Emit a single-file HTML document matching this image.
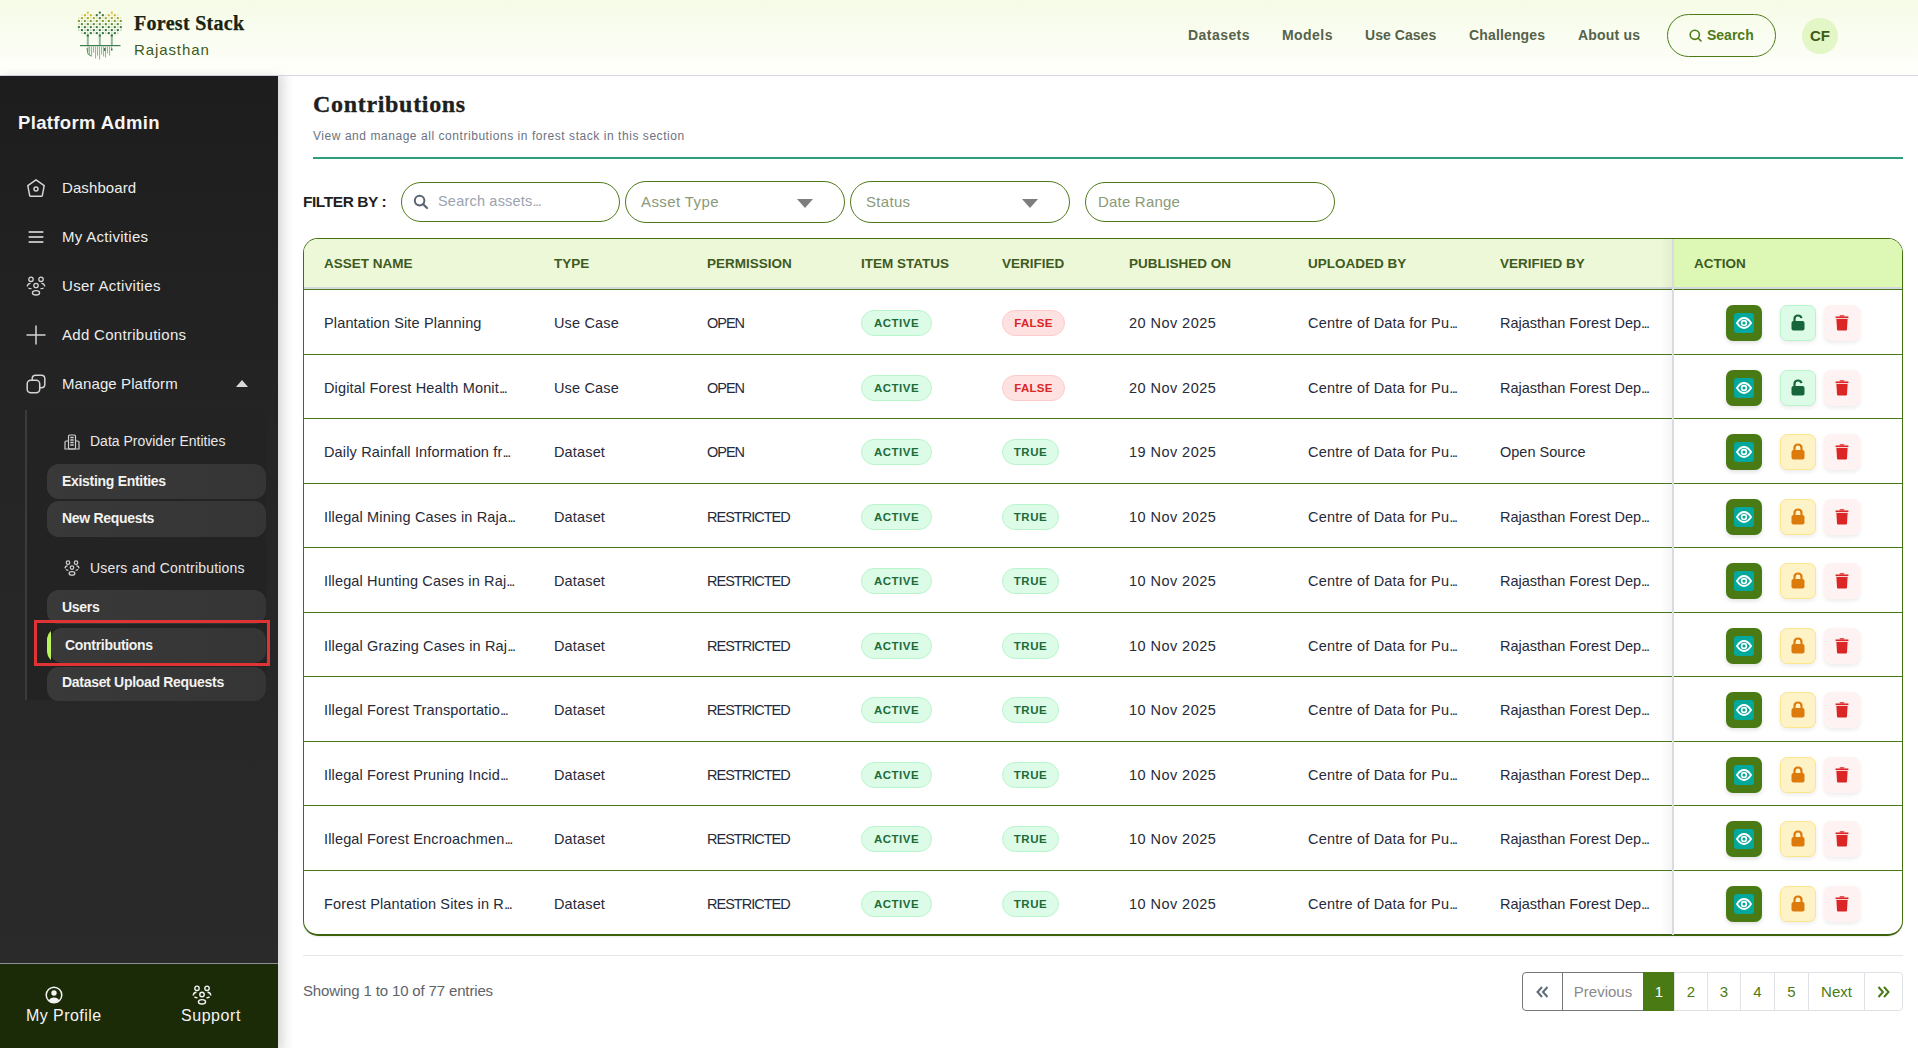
<!DOCTYPE html>
<html><head><meta charset="utf-8">
<style>
*{box-sizing:border-box;margin:0;padding:0}
html,body{width:1918px;height:1048px;overflow:hidden;background:#fff;font-family:"Liberation Sans",sans-serif}
.a{position:absolute;white-space:nowrap}
#hdr{position:absolute;left:0;top:0;width:1918px;height:76px;background:linear-gradient(180deg,#f6fbe6 0%,#fafdf1 50%,#fefffb 100%);border-bottom:1px solid #d5d9df}
.nav{position:absolute;top:27px;font-size:14px;font-weight:700;color:#56624b;line-height:16px;letter-spacing:0.45px}
#side{position:absolute;left:0;top:76px;width:278px;height:972px;background:linear-gradient(180deg,#1d1d1d 0%,#252525 40%,#2b2b2b 100%);box-shadow:3px 0 10px rgba(0,0,0,.10)}
.si{position:absolute;left:62px;font-size:15px;color:#ededed;line-height:18px;letter-spacing:0.3px}
.ico{position:absolute}
.pill{position:absolute;left:47px;width:219px;border-radius:12px;background:linear-gradient(90deg,#393939,#353535);}
.pt{position:absolute;left:15px;font-size:14px;font-weight:700;color:#f1f1f1;line-height:16px}
#foot{position:absolute;left:0;top:963px;width:278px;height:85px;background:#1b2a07;border-top:1px solid #8a8f98}
</style></head><body>

<div id="hdr">
  <svg class="ico" style="left:74px;top:8px" width="54" height="54" viewBox="0 0 54 54"><rect x="12.8" y="3.6" width="2" height="2" fill="#d8c22e"/><rect x="24.8" y="3.6" width="2" height="2" fill="#2f6f45"/><rect x="36.8" y="3.6" width="2" height="2" fill="#d8c22e"/><rect x="9.9" y="6.2" width="2" height="2" fill="#c9b62a"/><rect x="15.8" y="6.2" width="2" height="2" fill="#c9b62a"/><rect x="21.8" y="6.2" width="2" height="2" fill="#2f6f45"/><rect x="27.8" y="6.2" width="2" height="2" fill="#2f6f45"/><rect x="33.8" y="6.2" width="2" height="2" fill="#c9b62a"/><rect x="39.8" y="6.2" width="2" height="2" fill="#c9b62a"/><rect x="7.3" y="6.6" width="1.2" height="1.2" fill="#c9b62a" opacity="0.45"/><rect x="13.2" y="6.6" width="1.2" height="1.2" fill="#c9b62a" opacity="0.45"/><rect x="19.2" y="6.6" width="1.2" height="1.2" fill="#c9b62a" opacity="0.45"/><rect x="25.2" y="6.6" width="1.2" height="1.2" fill="#c9b62a" opacity="0.45"/><rect x="31.2" y="6.6" width="1.2" height="1.2" fill="#c9b62a" opacity="0.45"/><rect x="37.2" y="6.6" width="1.2" height="1.2" fill="#c9b62a" opacity="0.45"/><rect x="43.2" y="6.6" width="1.2" height="1.2" fill="#c9b62a" opacity="0.45"/><rect x="6.9" y="9.1" width="2" height="2" fill="#a9a630"/><rect x="12.8" y="9.1" width="2" height="2" fill="#a9a630"/><rect x="18.8" y="9.1" width="2" height="2" fill="#a9a630"/><rect x="24.8" y="9.1" width="2" height="2" fill="#3a7a45"/><rect x="30.8" y="9.1" width="2" height="2" fill="#a9a630"/><rect x="36.8" y="9.1" width="2" height="2" fill="#a9a630"/><rect x="42.8" y="9.1" width="2" height="2" fill="#a9a630"/><rect x="4.3" y="9.5" width="1.2" height="1.2" fill="#a9a630" opacity="0.45"/><rect x="10.3" y="9.5" width="1.2" height="1.2" fill="#a9a630" opacity="0.45"/><rect x="16.2" y="9.5" width="1.2" height="1.2" fill="#a9a630" opacity="0.45"/><rect x="22.2" y="9.5" width="1.2" height="1.2" fill="#a9a630" opacity="0.45"/><rect x="28.2" y="9.5" width="1.2" height="1.2" fill="#a9a630" opacity="0.45"/><rect x="34.2" y="9.5" width="1.2" height="1.2" fill="#a9a630" opacity="0.45"/><rect x="40.2" y="9.5" width="1.2" height="1.2" fill="#a9a630" opacity="0.45"/><rect x="46.2" y="9.5" width="1.2" height="1.2" fill="#a9a630" opacity="0.45"/><rect x="3.9" y="12.0" width="2" height="2" fill="#7e9f34"/><rect x="9.9" y="12.0" width="2" height="2" fill="#7e9f34"/><rect x="15.8" y="12.0" width="2" height="2" fill="#7e9f34"/><rect x="21.8" y="12.0" width="2" height="2" fill="#7e9f34"/><rect x="27.8" y="12.0" width="2" height="2" fill="#7e9f34"/><rect x="33.8" y="12.0" width="2" height="2" fill="#7e9f34"/><rect x="39.8" y="12.0" width="2" height="2" fill="#7e9f34"/><rect x="45.8" y="12.0" width="2" height="2" fill="#7e9f34"/><rect x="7.3" y="12.4" width="1.2" height="1.2" fill="#7e9f34" opacity="0.45"/><rect x="13.2" y="12.4" width="1.2" height="1.2" fill="#7e9f34" opacity="0.45"/><rect x="19.2" y="12.4" width="1.2" height="1.2" fill="#7e9f34" opacity="0.45"/><rect x="25.2" y="12.4" width="1.2" height="1.2" fill="#7e9f34" opacity="0.45"/><rect x="31.2" y="12.4" width="1.2" height="1.2" fill="#7e9f34" opacity="0.45"/><rect x="37.2" y="12.4" width="1.2" height="1.2" fill="#7e9f34" opacity="0.45"/><rect x="43.2" y="12.4" width="1.2" height="1.2" fill="#7e9f34" opacity="0.45"/><rect x="6.9" y="15.1" width="2" height="2" fill="#5a8e3c"/><rect x="12.8" y="15.1" width="2" height="2" fill="#5a8e3c"/><rect x="18.8" y="15.1" width="2" height="2" fill="#5a8e3c"/><rect x="24.8" y="15.1" width="2" height="2" fill="#5a8e3c"/><rect x="30.8" y="15.1" width="2" height="2" fill="#5a8e3c"/><rect x="36.8" y="15.1" width="2" height="2" fill="#5a8e3c"/><rect x="42.8" y="15.1" width="2" height="2" fill="#5a8e3c"/><rect x="4.3" y="15.5" width="1.2" height="1.2" fill="#5a8e3c" opacity="0.45"/><rect x="10.3" y="15.5" width="1.2" height="1.2" fill="#5a8e3c" opacity="0.45"/><rect x="16.2" y="15.5" width="1.2" height="1.2" fill="#5a8e3c" opacity="0.45"/><rect x="22.2" y="15.5" width="1.2" height="1.2" fill="#5a8e3c" opacity="0.45"/><rect x="28.2" y="15.5" width="1.2" height="1.2" fill="#5a8e3c" opacity="0.45"/><rect x="34.2" y="15.5" width="1.2" height="1.2" fill="#5a8e3c" opacity="0.45"/><rect x="40.2" y="15.5" width="1.2" height="1.2" fill="#5a8e3c" opacity="0.45"/><rect x="46.2" y="15.5" width="1.2" height="1.2" fill="#5a8e3c" opacity="0.45"/><rect x="3.9" y="18.1" width="2" height="2" fill="#3b7a40"/><rect x="9.9" y="18.1" width="2" height="2" fill="#3b7a40"/><rect x="15.8" y="18.1" width="2" height="2" fill="#3b7a40"/><rect x="21.8" y="18.1" width="2" height="2" fill="#3b7a40"/><rect x="27.8" y="18.1" width="2" height="2" fill="#3b7a40"/><rect x="33.8" y="18.1" width="2" height="2" fill="#3b7a40"/><rect x="39.8" y="18.1" width="2" height="2" fill="#3b7a40"/><rect x="45.8" y="18.1" width="2" height="2" fill="#3b7a40"/><rect x="7.3" y="18.5" width="1.2" height="1.2" fill="#3b7a40" opacity="0.45"/><rect x="13.2" y="18.5" width="1.2" height="1.2" fill="#3b7a40" opacity="0.45"/><rect x="19.2" y="18.5" width="1.2" height="1.2" fill="#3b7a40" opacity="0.45"/><rect x="25.2" y="18.5" width="1.2" height="1.2" fill="#3b7a40" opacity="0.45"/><rect x="31.2" y="18.5" width="1.2" height="1.2" fill="#3b7a40" opacity="0.45"/><rect x="37.2" y="18.5" width="1.2" height="1.2" fill="#3b7a40" opacity="0.45"/><rect x="43.2" y="18.5" width="1.2" height="1.2" fill="#3b7a40" opacity="0.45"/><rect x="6.9" y="21.1" width="2" height="2" fill="#2f6f3e"/><rect x="12.8" y="21.1" width="2" height="2" fill="#2f6f3e"/><rect x="18.8" y="21.1" width="2" height="2" fill="#2f6f3e"/><rect x="24.8" y="21.1" width="2" height="2" fill="#2f6f3e"/><rect x="30.8" y="21.1" width="2" height="2" fill="#2f6f3e"/><rect x="36.8" y="21.1" width="2" height="2" fill="#2f6f3e"/><rect x="42.8" y="21.1" width="2" height="2" fill="#2f6f3e"/><rect x="4.3" y="21.5" width="1.2" height="1.2" fill="#2f6f3e" opacity="0.45"/><rect x="10.3" y="21.5" width="1.2" height="1.2" fill="#2f6f3e" opacity="0.45"/><rect x="16.2" y="21.5" width="1.2" height="1.2" fill="#2f6f3e" opacity="0.45"/><rect x="22.2" y="21.5" width="1.2" height="1.2" fill="#2f6f3e" opacity="0.45"/><rect x="28.2" y="21.5" width="1.2" height="1.2" fill="#2f6f3e" opacity="0.45"/><rect x="34.2" y="21.5" width="1.2" height="1.2" fill="#2f6f3e" opacity="0.45"/><rect x="40.2" y="21.5" width="1.2" height="1.2" fill="#2f6f3e" opacity="0.45"/><rect x="46.2" y="21.5" width="1.2" height="1.2" fill="#2f6f3e" opacity="0.45"/><rect x="9.9" y="24.1" width="2" height="2" fill="#2f6f3e"/><rect x="15.8" y="24.1" width="2" height="2" fill="#2f6f3e"/><rect x="21.8" y="24.1" width="2" height="2" fill="#2f6f3e"/><rect x="27.8" y="24.1" width="2" height="2" fill="#2f6f3e"/><rect x="33.8" y="24.1" width="2" height="2" fill="#2f6f3e"/><rect x="39.8" y="24.1" width="2" height="2" fill="#2f6f3e"/><rect x="7.3" y="24.5" width="1.2" height="1.2" fill="#2f6f3e" opacity="0.45"/><rect x="13.2" y="24.5" width="1.2" height="1.2" fill="#2f6f3e" opacity="0.45"/><rect x="19.2" y="24.5" width="1.2" height="1.2" fill="#2f6f3e" opacity="0.45"/><rect x="25.2" y="24.5" width="1.2" height="1.2" fill="#2f6f3e" opacity="0.45"/><rect x="31.2" y="24.5" width="1.2" height="1.2" fill="#2f6f3e" opacity="0.45"/><rect x="37.2" y="24.5" width="1.2" height="1.2" fill="#2f6f3e" opacity="0.45"/><rect x="43.2" y="24.5" width="1.2" height="1.2" fill="#2f6f3e" opacity="0.45"/><rect x="12.8" y="26.5" width="2" height="11" fill="#8fb99a"/><rect x="12.8" y="26.5" width="2" height="2" fill="#2f6f3e"/><rect x="24.8" y="26.5" width="2" height="11" fill="#8fb99a"/><rect x="24.8" y="26.5" width="2" height="2" fill="#2f6f3e"/><rect x="36.8" y="26.5" width="2" height="11" fill="#8fb99a"/><rect x="36.8" y="26.5" width="2" height="2" fill="#2f6f3e"/><rect x="6" y="37" width="40.5" height="1.2" fill="#3f7d4f"/><rect x="13.5" y="38.5" width="1.1" height="5" fill="#7fae8d" opacity="0.85"/><rect x="15.0" y="38.5" width="1.1" height="8" fill="#7fae8d" opacity="0.85"/><rect x="17.0" y="38.5" width="1.1" height="10" fill="#7fae8d" opacity="0.85"/><rect x="19.0" y="38.5" width="1.1" height="6" fill="#7fae8d" opacity="0.85"/><rect x="21.0" y="38.5" width="1.1" height="12" fill="#7fae8d" opacity="0.85"/><rect x="23.0" y="38.5" width="1.1" height="9" fill="#7fae8d" opacity="0.85"/><rect x="25.0" y="38.5" width="1.1" height="13" fill="#7fae8d" opacity="0.85"/><rect x="27.0" y="38.5" width="1.1" height="8" fill="#7fae8d" opacity="0.85"/><rect x="29.0" y="38.5" width="1.1" height="10" fill="#7fae8d" opacity="0.85"/><rect x="31.0" y="38.5" width="1.1" height="11" fill="#7fae8d" opacity="0.85"/><rect x="33.0" y="38.5" width="1.1" height="7" fill="#7fae8d" opacity="0.85"/><rect x="35.0" y="38.5" width="1.1" height="9" fill="#7fae8d" opacity="0.85"/><rect x="37.0" y="38.5" width="1.1" height="4" fill="#7fae8d" opacity="0.85"/><path d="M13 40L14 46L17 48" stroke="#4a8a5a" stroke-width="1" fill="none"/><rect x="30" y="40" width="1.5" height="3" fill="#3f7d4f"/><rect x="37" y="40.5" width="1.5" height="2" fill="#3f7d4f"/></svg>
  <div class="a" style="left:134px;top:12px;font-family:'Liberation Serif',serif;font-weight:700;font-size:20px;color:#1a2410;line-height:22px;letter-spacing:0.3px;-webkit-text-stroke:0.25px #1a2410">Forest Stack</div>
  <div class="a" style="left:134px;top:41px;font-size:15px;color:#3c5a1c;line-height:17px;letter-spacing:0.9px">Rajasthan</div>

  <div class="nav a" style="left:1188px">Datasets</div>
  <div class="nav a" style="left:1282px">Models</div>
  <div class="nav a" style="left:1365px;letter-spacing:0.05px">Use Cases</div>
  <div class="nav a" style="left:1469px;letter-spacing:0.15px">Challenges</div>
  <div class="nav a" style="left:1578px;letter-spacing:0.2px">About us</div>

  <div class="a" style="left:1667px;top:14px;width:109px;height:43px;border:1.5px solid #4f7a18;border-radius:22px"></div>
  <svg class="ico" style="left:1689px;top:29px" width="13" height="13" viewBox="0 0 13 13"><circle cx="5.8" cy="5.8" r="4.6" fill="none" stroke="#4f7a18" stroke-width="1.6"/><path d="M9.2 9.2L12 12" stroke="#4f7a18" stroke-width="1.6" stroke-linecap="round"/></svg>
  <div class="a" style="left:1707px;top:27px;font-size:14px;font-weight:700;color:#4f7a18;line-height:16px">Search</div>

  <div class="a" style="left:1802px;top:18px;width:36px;height:36px;border-radius:50%;background:#e3f6c5"></div>
  <div class="a" style="left:1810px;top:27px;font-size:15px;font-weight:700;color:#3d5c16;line-height:17px">CF</div>
</div>

<div id="side">
  <div class="a" style="left:18px;top:37px;font-size:18.5px;font-weight:700;color:#f5f5f5;line-height:20px;letter-spacing:0.35px">Platform Admin</div>
  <!-- Dashboard -->
  <svg class="ico" style="left:26px;top:102px" width="20" height="20" viewBox="0 0 20 20"><path d="M10 1.8L18.2 7.6L16.3 17.6Q16.1 18.3 15.4 18.3H4.6Q3.9 18.3 3.7 17.6L1.8 7.6Z" fill="none" stroke="#d4d4d4" stroke-width="1.5" stroke-linejoin="round"/><circle cx="10" cy="11" r="2" fill="none" stroke="#d4d4d4" stroke-width="1.5"/></svg>
  <div class="si a" style="top:103px;letter-spacing:0.1px">Dashboard</div>
  <!-- My Activities -->
  <svg class="ico" style="left:28px;top:154px" width="16" height="14" viewBox="0 0 16 14"><rect x="0.6" y="1" width="14.8" height="2" rx="0.5" fill="#b8b8b8"/><rect x="0.6" y="6" width="14.8" height="2" rx="0.5" fill="#b8b8b8"/><rect x="0.6" y="11" width="14.8" height="2" rx="0.5" fill="#b8b8b8"/></svg>
  <div class="si a" style="top:152px">My Activities</div>
  <!-- User Activities -->
  <svg class="ico" style="left:26px;top:200px" width="20" height="20" viewBox="0 0 20 20" fill="none" stroke="#d4d4d4" stroke-width="1.3"><circle cx="5" cy="3.3" r="2.2"/><circle cx="15" cy="3.3" r="2.2"/><circle cx="10" cy="9.5" r="2.2"/><path d="M1.2 10.5Q1.5 7.5 4.5 7.3M18.8 10.5Q18.5 7.5 15.5 7.3"/><path d="M2.5 11.8Q3.5 13 5.5 12.6M17.5 11.8Q16.5 13 14.5 12.6"/><ellipse cx="10" cy="16.8" rx="3.6" ry="2.2"/></svg>
  <div class="si a" style="top:201px">User Activities</div>
  <!-- Add -->
  <svg class="ico" style="left:26px;top:249px" width="20" height="20" viewBox="0 0 20 20"><path d="M10 0.5V19.5M0.5 10H19.5" stroke="#d4d4d4" stroke-width="1.5"/></svg>
  <div class="si a" style="top:250px">Add Contributions</div>
  <!-- Manage -->
  <svg class="ico" style="left:26px;top:298px" width="20" height="20" viewBox="0 0 20 20" fill="none" stroke="#d4d4d4" stroke-width="1.5"><rect x="1.2" y="6.2" width="12.5" height="12.5" rx="3.5"/><path d="M6.2 6.2V4.7Q6.2 1.2 9.7 1.2H15.3Q18.8 1.2 18.8 4.7V10.3Q18.8 13.8 15.3 13.8H13.7"/></svg>
  <div class="si a" style="top:299px;letter-spacing:0.1px">Manage Platform</div>
  <svg class="ico" style="left:236px;top:304px" width="12" height="7" viewBox="0 0 12 7"><path d="M6 0L12 7H0Z" fill="#d9d9d9"/></svg>

  <!-- submenu -->
  <div class="a" style="left:25px;top:334px;width:2px;height:290px;background:#3c3c3c"></div>
  <div class="a" style="left:27px;top:334px;width:239px;height:290px;background:#232323;border-radius:0 8px 8px 0"></div>

  <svg class="ico" style="left:64px;top:358px" width="16" height="16" viewBox="0 0 16 16" fill="none" stroke="#cfcfcf" stroke-width="1.2"><rect x="4.5" y="1" width="7" height="14" rx="1.2"/><path d="M4.5 7H2.2Q1 7 1 8.2V15H15V8.2Q15 7 13.8 7H11.5"/><path d="M6.3 3.5H9.7M6.3 6H9.7M6.3 8.5H9.7M6.3 11H9.7" stroke-width="1.6"/></svg>
  <div class="a" style="left:90px;top:357px;font-size:14px;color:#e8e8e8;line-height:16px">Data Provider Entities</div>

  <div class="pill" style="top:388px;height:35px"></div>
  <div class="a" style="left:62px;top:397px;font-size:14px;font-weight:700;color:#f2f2f2;line-height:16px;letter-spacing:-0.3px">Existing Entities</div>
  <div class="pill" style="top:425px;height:36px"></div>
  <div class="a" style="left:62px;top:434px;font-size:14px;font-weight:700;color:#f2f2f2;line-height:16px;letter-spacing:-0.3px">New Requests</div>

  <svg class="ico" style="left:64px;top:484px" width="16" height="16" viewBox="0 0 20 20" fill="none" stroke="#cfcfcf" stroke-width="1.5"><circle cx="5" cy="3.3" r="2.2"/><circle cx="15" cy="3.3" r="2.2"/><circle cx="10" cy="9.5" r="2.2"/><path d="M1.2 10.5Q1.5 7.5 4.5 7.3M18.8 10.5Q18.5 7.5 15.5 7.3"/><path d="M2.5 11.8Q3.5 13 5.5 12.6M17.5 11.8Q16.5 13 14.5 12.6"/><ellipse cx="10" cy="16.8" rx="3.6" ry="2.2"/></svg>
  <div class="a" style="left:90px;top:484px;font-size:14px;color:#e8e8e8;line-height:16px;letter-spacing:0.2px">Users and Contributions</div>

  <div class="pill" style="top:514px;height:34px"></div>
  <div class="a" style="left:62px;top:523px;font-size:14px;font-weight:700;color:#f2f2f2;line-height:16px;letter-spacing:-0.3px">Users</div>
  <div class="pill" style="top:552px;height:34.5px;overflow:hidden;background:#1f1f1f"><div style="position:absolute;left:0;top:0;width:4px;height:100%;background:#bdf35a"></div><div style="position:absolute;left:3.5px;top:0;right:0;height:100%;border-radius:10px;background:linear-gradient(90deg,#393939,#353535)"></div></div>
  <div class="a" style="left:65px;top:561px;font-size:14px;font-weight:700;color:#f2f2f2;line-height:16px;letter-spacing:-0.3px">Contributions</div>
  <div class="a" style="left:34px;top:544.3px;width:236px;height:46px;border:3px solid #e03333"></div>
  <div class="pill" style="top:591px;height:34px"></div>
  <div class="a" style="left:62px;top:598px;font-size:14px;font-weight:700;color:#f2f2f2;line-height:16px;letter-spacing:-0.3px">Dataset Upload Requests</div>
</div>

<div id="foot">
  <svg class="ico" style="left:45px;top:22px" width="18" height="18" viewBox="0 0 18 18"><circle cx="9" cy="9" r="7.8" fill="none" stroke="#f4f4f4" stroke-width="1.5"/><circle cx="9" cy="7" r="2.7" fill="#f4f4f4"/><path d="M3.8 14.6Q5.2 11.6 9 11.6Q12.8 11.6 14.2 14.6Q12.2 16.8 9 16.8Q5.8 16.8 3.8 14.6Z" fill="#f4f4f4"/></svg>
  <div class="a" style="left:26px;top:43px;font-size:16px;color:#f4f4f4;line-height:18px;letter-spacing:0.45px">My Profile</div>
  <svg class="ico" style="left:192px;top:21px" width="20" height="20" viewBox="0 0 20 20" fill="none" stroke="#f4f4f4" stroke-width="1.4"><circle cx="5" cy="3.3" r="2.2"/><circle cx="15" cy="3.3" r="2.2"/><circle cx="10" cy="9.5" r="2.2"/><path d="M1.2 10.5Q1.5 7.5 4.5 7.3M18.8 10.5Q18.5 7.5 15.5 7.3"/><path d="M2.5 11.8Q3.5 13 5.5 12.6M17.5 11.8Q16.5 13 14.5 12.6"/><ellipse cx="10" cy="16.8" rx="3.6" ry="2.2"/></svg>
  <div class="a" style="left:181px;top:43px;font-size:16px;color:#f4f4f4;line-height:18px;letter-spacing:0.55px">Support</div>
</div>

<!--MAIN-->
<style>
.m{position:absolute;white-space:nowrap}
.flt{position:absolute;border:1.5px solid #4f7a18;border-radius:21px;background:#fff}
.ph{position:absolute;font-size:15px;line-height:17px;color:#8a9a78}
.th{position:absolute;top:255.5px;font-size:13.5px;font-weight:700;color:#3f5a1f;line-height:16px;letter-spacing:0px}
.td{position:absolute;font-size:14.5px;color:#262a3a;line-height:17px;letter-spacing:0.15px}
.el{letter-spacing:-1.6px}
.cap{letter-spacing:-1px}
.bdg{position:absolute;height:26px;border-radius:13px;font-size:11.5px;font-weight:700;line-height:24px;text-align:center;letter-spacing:0.5px}
.act{background:#dcfce7;border:1px solid #b9f5cc;color:#1c6b3a}
.fls{background:#fee2e2;border:1px solid #fecaca;color:#dc2626}
.btn{position:absolute;width:36px;height:36px;border-radius:7px}
.pg{position:absolute;top:972px;height:39px;border:1px solid #dee2e6;font-size:15px;line-height:37px;text-align:center;color:#4f7a18}
</style>
<div class="m" style="left:278px;top:76px;width:16px;height:972px;background:linear-gradient(90deg,rgba(0,0,0,.07),rgba(0,0,0,0))"></div>
<div class="m" style="left:313px;top:91px;font-family:'Liberation Serif',serif;font-weight:700;font-size:24px;line-height:26px;color:#1f1f1f;letter-spacing:0.68px;-webkit-text-stroke:0.35px #1f1f1f">Contributions</div>
<div class="m" style="left:313px;top:129px;font-size:12px;line-height:14px;color:#6b7280;letter-spacing:0.55px">View and manage all contributions in forest stack in this section</div>
<div class="m" style="left:313px;top:157px;width:1590px;height:2px;background:#2d9f7c"></div>
<div class="m" style="left:303px;top:193px;font-size:15.5px;font-weight:700;line-height:18px;color:#1f1f1f;letter-spacing:-0.45px">FILTER BY :</div>
<div class="flt" style="left:401px;top:182px;width:219px;height:40px"></div>
<svg class="m" style="left:413px;top:194px" width="16" height="16" viewBox="0 0 16 16"><circle cx="6.6" cy="6.6" r="4.8" fill="none" stroke="#5b6472" stroke-width="2"/><path d="M10.2 10.2L14 14" stroke="#5b6472" stroke-width="2.2" stroke-linecap="round"/></svg>
<div class="ph m" style="left:438px;top:193.3px;font-size:14.5px;color:#9aa3b0;letter-spacing:0.2px">Search assets<span style="letter-spacing:-1.4px">...</span></div>
<div class="flt" style="left:625px;top:181px;width:220px;height:42px"></div>
<div class="ph m" style="left:641px;top:193px;letter-spacing:0.4px">Asset Type</div>
<svg class="m" style="left:797px;top:199px" width="16" height="9" viewBox="0 0 16 9"><path d="M0 0H16L8 9Z" fill="#7d7d7d"/></svg>
<div class="flt" style="left:850px;top:181px;width:220px;height:42px"></div>
<div class="ph m" style="left:866px;top:193px;letter-spacing:0.3px">Status</div>
<svg class="m" style="left:1022px;top:199px" width="16" height="9" viewBox="0 0 16 9"><path d="M0 0H16L8 9Z" fill="#7d7d7d"/></svg>
<div class="flt" style="left:1085px;top:182px;width:250px;height:40px"></div>
<div class="ph m" style="left:1098px;top:193px;letter-spacing:0.2px">Date Range</div>
<div class="m" style="left:303px;top:238px;width:1600px;height:698px;border:1.5px solid #44700f;border-bottom:2px solid #3d640c;border-radius:15px;overflow:hidden;background:#fff;box-shadow:0 1px 2px rgba(0,0,0,.08)"><div style="position:absolute;left:0;top:0;width:100%;height:50px;background:#ecf8d7"></div><div style="position:absolute;left:1368px;top:0;width:240px;height:50px;background:#dcf8b4"></div></div>
<div class="m" style="left:304px;top:287px;width:1598px;height:2px;background:#d3d7df"></div>
<div class="m" style="left:303px;top:289.00px;width:1600px;height:1px;background:#4a7a14"></div>
<div class="m" style="left:303px;top:353.50px;width:1600px;height:1px;background:#4a7a14"></div>
<div class="m" style="left:303px;top:418.00px;width:1600px;height:1px;background:#4a7a14"></div>
<div class="m" style="left:303px;top:482.50px;width:1600px;height:1px;background:#4a7a14"></div>
<div class="m" style="left:303px;top:547.00px;width:1600px;height:1px;background:#4a7a14"></div>
<div class="m" style="left:303px;top:611.50px;width:1600px;height:1px;background:#4a7a14"></div>
<div class="m" style="left:303px;top:676.00px;width:1600px;height:1px;background:#4a7a14"></div>
<div class="m" style="left:303px;top:740.50px;width:1600px;height:1px;background:#4a7a14"></div>
<div class="m" style="left:303px;top:805.00px;width:1600px;height:1px;background:#4a7a14"></div>
<div class="m" style="left:303px;top:869.50px;width:1600px;height:1px;background:#4a7a14"></div>
<div class="m" style="left:1660px;top:239px;width:12px;height:696px;background:linear-gradient(90deg,rgba(0,0,0,0),rgba(0,0,0,.04))"></div>
<div class="m" style="left:1672px;top:239px;width:2px;height:696px;background:#d9dbe0"></div>
<div class="th m" style="left:324px">ASSET NAME</div>
<div class="th m" style="left:554px">TYPE</div>
<div class="th m" style="left:707px">PERMISSION</div>
<div class="th m" style="left:861px">ITEM STATUS</div>
<div class="th m" style="left:1002px">VERIFIED</div>
<div class="th m" style="left:1129px">PUBLISHED ON</div>
<div class="th m" style="left:1308px">UPLOADED BY</div>
<div class="th m" style="left:1500px">VERIFIED BY</div>
<div class="th m" style="left:1694px">ACTION</div>
<div class="td m" style="left:324px;top:315.00px">Plantation Site Planning</div>
<div class="td m" style="left:554px;top:315.00px">Use Case</div>
<div class="td cap m" style="left:707px;top:315.00px">OPEN</div>
<div class="bdg act m" style="left:861px;top:310.00px;width:71px">ACTIVE</div>
<div class="bdg fls m" style="left:1002px;top:310.00px;width:63px;letter-spacing:0.25px">FALSE</div>
<div class="td m" style="left:1129px;top:315.00px;letter-spacing:0.45px">20 Nov 2025</div>
<div class="td m" style="left:1308px;top:315.00px;letter-spacing:0.2px">Centre of Data for Pu<span class="el">...</span></div>
<div class="td m" style="left:1500px;top:315.00px;letter-spacing:0px">Rajasthan Forest Dep<span class="el">...</span></div>
<div class="btn m" style="left:1726px;top:305.00px;background:#4a7a14;box-shadow:0 2px 4px rgba(0,0,0,.12)"><svg style="position:absolute;left:8px;top:8px" width="20" height="20" viewBox="0 0 20 20"><rect width="20" height="20" rx="3" fill="#02a89c"/><path d="M3 10Q6.2 5 10 5Q13.8 5 17 10Q13.8 15 10 15Q6.2 15 3 10Z" fill="none" stroke="#fff" stroke-width="1.9"/><circle cx="10" cy="10" r="2.4" fill="none" stroke="#fff" stroke-width="1.6"/></svg></div>
<div class="btn m" style="left:1780px;top:305.00px;background:#dcfce7;border:1px solid #b9f5cc;box-shadow:0 2px 4px rgba(0,0,0,.08)"><svg style="position:absolute;left:9px;top:8px" width="16" height="17" viewBox="0 0 16 17"><path d="M4.5 7.5V5Q4.5 1.5 8 1.5Q11 1.5 11.4 4.2" fill="none" stroke="#17653a" stroke-width="2.2"/><rect x="1.5" y="7" width="13" height="9.5" rx="2" fill="#17653a"/></svg></div>
<div class="btn m" style="left:1824px;top:305.00px;background:#fef2f2;box-shadow:0 2px 4px rgba(0,0,0,.08)"><svg style="position:absolute;left:11px;top:9px" width="14" height="17" viewBox="0 0 14 17"><path d="M5.2 1.8H8.8" stroke="#dc2626" stroke-width="1.3" stroke-linecap="round"/><path d="M0.6 3.3H13.4" stroke="#dc2626" stroke-width="1.7"/><path d="M1.4 4.9H12.6L12 15.4Q11.9 16.4 10.9 16.4H3.1Q2.1 16.4 2 15.4Z" fill="#dc2626"/></svg></div>
<div class="td m" style="left:324px;top:379.50px">Digital Forest Health Monit<span class="el">...</span></div>
<div class="td m" style="left:554px;top:379.50px">Use Case</div>
<div class="td cap m" style="left:707px;top:379.50px">OPEN</div>
<div class="bdg act m" style="left:861px;top:374.50px;width:71px">ACTIVE</div>
<div class="bdg fls m" style="left:1002px;top:374.50px;width:63px;letter-spacing:0.25px">FALSE</div>
<div class="td m" style="left:1129px;top:379.50px;letter-spacing:0.45px">20 Nov 2025</div>
<div class="td m" style="left:1308px;top:379.50px;letter-spacing:0.2px">Centre of Data for Pu<span class="el">...</span></div>
<div class="td m" style="left:1500px;top:379.50px;letter-spacing:0px">Rajasthan Forest Dep<span class="el">...</span></div>
<div class="btn m" style="left:1726px;top:369.50px;background:#4a7a14;box-shadow:0 2px 4px rgba(0,0,0,.12)"><svg style="position:absolute;left:8px;top:8px" width="20" height="20" viewBox="0 0 20 20"><rect width="20" height="20" rx="3" fill="#02a89c"/><path d="M3 10Q6.2 5 10 5Q13.8 5 17 10Q13.8 15 10 15Q6.2 15 3 10Z" fill="none" stroke="#fff" stroke-width="1.9"/><circle cx="10" cy="10" r="2.4" fill="none" stroke="#fff" stroke-width="1.6"/></svg></div>
<div class="btn m" style="left:1780px;top:369.50px;background:#dcfce7;border:1px solid #b9f5cc;box-shadow:0 2px 4px rgba(0,0,0,.08)"><svg style="position:absolute;left:9px;top:8px" width="16" height="17" viewBox="0 0 16 17"><path d="M4.5 7.5V5Q4.5 1.5 8 1.5Q11 1.5 11.4 4.2" fill="none" stroke="#17653a" stroke-width="2.2"/><rect x="1.5" y="7" width="13" height="9.5" rx="2" fill="#17653a"/></svg></div>
<div class="btn m" style="left:1824px;top:369.50px;background:#fef2f2;box-shadow:0 2px 4px rgba(0,0,0,.08)"><svg style="position:absolute;left:11px;top:9px" width="14" height="17" viewBox="0 0 14 17"><path d="M5.2 1.8H8.8" stroke="#dc2626" stroke-width="1.3" stroke-linecap="round"/><path d="M0.6 3.3H13.4" stroke="#dc2626" stroke-width="1.7"/><path d="M1.4 4.9H12.6L12 15.4Q11.9 16.4 10.9 16.4H3.1Q2.1 16.4 2 15.4Z" fill="#dc2626"/></svg></div>
<div class="td m" style="left:324px;top:444.00px">Daily Rainfall Information fr<span class="el">...</span></div>
<div class="td m" style="left:554px;top:444.00px">Dataset</div>
<div class="td cap m" style="left:707px;top:444.00px">OPEN</div>
<div class="bdg act m" style="left:861px;top:439.00px;width:71px">ACTIVE</div>
<div class="bdg act m" style="left:1002px;top:439.00px;width:57px">TRUE</div>
<div class="td m" style="left:1129px;top:444.00px;letter-spacing:0.45px">19 Nov 2025</div>
<div class="td m" style="left:1308px;top:444.00px;letter-spacing:0.2px">Centre of Data for Pu<span class="el">...</span></div>
<div class="td m" style="left:1500px;top:444.00px;letter-spacing:0px">Open Source</div>
<div class="btn m" style="left:1726px;top:434.00px;background:#4a7a14;box-shadow:0 2px 4px rgba(0,0,0,.12)"><svg style="position:absolute;left:8px;top:8px" width="20" height="20" viewBox="0 0 20 20"><rect width="20" height="20" rx="3" fill="#02a89c"/><path d="M3 10Q6.2 5 10 5Q13.8 5 17 10Q13.8 15 10 15Q6.2 15 3 10Z" fill="none" stroke="#fff" stroke-width="1.9"/><circle cx="10" cy="10" r="2.4" fill="none" stroke="#fff" stroke-width="1.6"/></svg></div>
<div class="btn m" style="left:1780px;top:434.00px;background:#fef3c7;border:1px solid #fde68a;box-shadow:0 2px 4px rgba(0,0,0,.08)"><svg style="position:absolute;left:9px;top:8px" width="16" height="17" viewBox="0 0 16 17"><path d="M4.5 7.5V5Q4.5 1.5 8 1.5Q11.5 1.5 11.5 5V7.5" fill="none" stroke="#dc7a0b" stroke-width="2.2"/><rect x="1.5" y="7" width="13" height="9.5" rx="2" fill="#dc7a0b"/></svg></div>
<div class="btn m" style="left:1824px;top:434.00px;background:#fef2f2;box-shadow:0 2px 4px rgba(0,0,0,.08)"><svg style="position:absolute;left:11px;top:9px" width="14" height="17" viewBox="0 0 14 17"><path d="M5.2 1.8H8.8" stroke="#dc2626" stroke-width="1.3" stroke-linecap="round"/><path d="M0.6 3.3H13.4" stroke="#dc2626" stroke-width="1.7"/><path d="M1.4 4.9H12.6L12 15.4Q11.9 16.4 10.9 16.4H3.1Q2.1 16.4 2 15.4Z" fill="#dc2626"/></svg></div>
<div class="td m" style="left:324px;top:508.50px">Illegal Mining Cases in Raja<span class="el">...</span></div>
<div class="td m" style="left:554px;top:508.50px">Dataset</div>
<div class="td cap m" style="left:707px;top:508.50px">RESTRICTED</div>
<div class="bdg act m" style="left:861px;top:503.50px;width:71px">ACTIVE</div>
<div class="bdg act m" style="left:1002px;top:503.50px;width:57px">TRUE</div>
<div class="td m" style="left:1129px;top:508.50px;letter-spacing:0.45px">10 Nov 2025</div>
<div class="td m" style="left:1308px;top:508.50px;letter-spacing:0.2px">Centre of Data for Pu<span class="el">...</span></div>
<div class="td m" style="left:1500px;top:508.50px;letter-spacing:0px">Rajasthan Forest Dep<span class="el">...</span></div>
<div class="btn m" style="left:1726px;top:498.50px;background:#4a7a14;box-shadow:0 2px 4px rgba(0,0,0,.12)"><svg style="position:absolute;left:8px;top:8px" width="20" height="20" viewBox="0 0 20 20"><rect width="20" height="20" rx="3" fill="#02a89c"/><path d="M3 10Q6.2 5 10 5Q13.8 5 17 10Q13.8 15 10 15Q6.2 15 3 10Z" fill="none" stroke="#fff" stroke-width="1.9"/><circle cx="10" cy="10" r="2.4" fill="none" stroke="#fff" stroke-width="1.6"/></svg></div>
<div class="btn m" style="left:1780px;top:498.50px;background:#fef3c7;border:1px solid #fde68a;box-shadow:0 2px 4px rgba(0,0,0,.08)"><svg style="position:absolute;left:9px;top:8px" width="16" height="17" viewBox="0 0 16 17"><path d="M4.5 7.5V5Q4.5 1.5 8 1.5Q11.5 1.5 11.5 5V7.5" fill="none" stroke="#dc7a0b" stroke-width="2.2"/><rect x="1.5" y="7" width="13" height="9.5" rx="2" fill="#dc7a0b"/></svg></div>
<div class="btn m" style="left:1824px;top:498.50px;background:#fef2f2;box-shadow:0 2px 4px rgba(0,0,0,.08)"><svg style="position:absolute;left:11px;top:9px" width="14" height="17" viewBox="0 0 14 17"><path d="M5.2 1.8H8.8" stroke="#dc2626" stroke-width="1.3" stroke-linecap="round"/><path d="M0.6 3.3H13.4" stroke="#dc2626" stroke-width="1.7"/><path d="M1.4 4.9H12.6L12 15.4Q11.9 16.4 10.9 16.4H3.1Q2.1 16.4 2 15.4Z" fill="#dc2626"/></svg></div>
<div class="td m" style="left:324px;top:573.00px">Illegal Hunting Cases in Raj<span class="el">...</span></div>
<div class="td m" style="left:554px;top:573.00px">Dataset</div>
<div class="td cap m" style="left:707px;top:573.00px">RESTRICTED</div>
<div class="bdg act m" style="left:861px;top:568.00px;width:71px">ACTIVE</div>
<div class="bdg act m" style="left:1002px;top:568.00px;width:57px">TRUE</div>
<div class="td m" style="left:1129px;top:573.00px;letter-spacing:0.45px">10 Nov 2025</div>
<div class="td m" style="left:1308px;top:573.00px;letter-spacing:0.2px">Centre of Data for Pu<span class="el">...</span></div>
<div class="td m" style="left:1500px;top:573.00px;letter-spacing:0px">Rajasthan Forest Dep<span class="el">...</span></div>
<div class="btn m" style="left:1726px;top:563.00px;background:#4a7a14;box-shadow:0 2px 4px rgba(0,0,0,.12)"><svg style="position:absolute;left:8px;top:8px" width="20" height="20" viewBox="0 0 20 20"><rect width="20" height="20" rx="3" fill="#02a89c"/><path d="M3 10Q6.2 5 10 5Q13.8 5 17 10Q13.8 15 10 15Q6.2 15 3 10Z" fill="none" stroke="#fff" stroke-width="1.9"/><circle cx="10" cy="10" r="2.4" fill="none" stroke="#fff" stroke-width="1.6"/></svg></div>
<div class="btn m" style="left:1780px;top:563.00px;background:#fef3c7;border:1px solid #fde68a;box-shadow:0 2px 4px rgba(0,0,0,.08)"><svg style="position:absolute;left:9px;top:8px" width="16" height="17" viewBox="0 0 16 17"><path d="M4.5 7.5V5Q4.5 1.5 8 1.5Q11.5 1.5 11.5 5V7.5" fill="none" stroke="#dc7a0b" stroke-width="2.2"/><rect x="1.5" y="7" width="13" height="9.5" rx="2" fill="#dc7a0b"/></svg></div>
<div class="btn m" style="left:1824px;top:563.00px;background:#fef2f2;box-shadow:0 2px 4px rgba(0,0,0,.08)"><svg style="position:absolute;left:11px;top:9px" width="14" height="17" viewBox="0 0 14 17"><path d="M5.2 1.8H8.8" stroke="#dc2626" stroke-width="1.3" stroke-linecap="round"/><path d="M0.6 3.3H13.4" stroke="#dc2626" stroke-width="1.7"/><path d="M1.4 4.9H12.6L12 15.4Q11.9 16.4 10.9 16.4H3.1Q2.1 16.4 2 15.4Z" fill="#dc2626"/></svg></div>
<div class="td m" style="left:324px;top:637.50px">Illegal Grazing Cases in Raj<span class="el">...</span></div>
<div class="td m" style="left:554px;top:637.50px">Dataset</div>
<div class="td cap m" style="left:707px;top:637.50px">RESTRICTED</div>
<div class="bdg act m" style="left:861px;top:632.50px;width:71px">ACTIVE</div>
<div class="bdg act m" style="left:1002px;top:632.50px;width:57px">TRUE</div>
<div class="td m" style="left:1129px;top:637.50px;letter-spacing:0.45px">10 Nov 2025</div>
<div class="td m" style="left:1308px;top:637.50px;letter-spacing:0.2px">Centre of Data for Pu<span class="el">...</span></div>
<div class="td m" style="left:1500px;top:637.50px;letter-spacing:0px">Rajasthan Forest Dep<span class="el">...</span></div>
<div class="btn m" style="left:1726px;top:627.50px;background:#4a7a14;box-shadow:0 2px 4px rgba(0,0,0,.12)"><svg style="position:absolute;left:8px;top:8px" width="20" height="20" viewBox="0 0 20 20"><rect width="20" height="20" rx="3" fill="#02a89c"/><path d="M3 10Q6.2 5 10 5Q13.8 5 17 10Q13.8 15 10 15Q6.2 15 3 10Z" fill="none" stroke="#fff" stroke-width="1.9"/><circle cx="10" cy="10" r="2.4" fill="none" stroke="#fff" stroke-width="1.6"/></svg></div>
<div class="btn m" style="left:1780px;top:627.50px;background:#fef3c7;border:1px solid #fde68a;box-shadow:0 2px 4px rgba(0,0,0,.08)"><svg style="position:absolute;left:9px;top:8px" width="16" height="17" viewBox="0 0 16 17"><path d="M4.5 7.5V5Q4.5 1.5 8 1.5Q11.5 1.5 11.5 5V7.5" fill="none" stroke="#dc7a0b" stroke-width="2.2"/><rect x="1.5" y="7" width="13" height="9.5" rx="2" fill="#dc7a0b"/></svg></div>
<div class="btn m" style="left:1824px;top:627.50px;background:#fef2f2;box-shadow:0 2px 4px rgba(0,0,0,.08)"><svg style="position:absolute;left:11px;top:9px" width="14" height="17" viewBox="0 0 14 17"><path d="M5.2 1.8H8.8" stroke="#dc2626" stroke-width="1.3" stroke-linecap="round"/><path d="M0.6 3.3H13.4" stroke="#dc2626" stroke-width="1.7"/><path d="M1.4 4.9H12.6L12 15.4Q11.9 16.4 10.9 16.4H3.1Q2.1 16.4 2 15.4Z" fill="#dc2626"/></svg></div>
<div class="td m" style="left:324px;top:702.00px">Illegal Forest Transportatio<span class="el">...</span></div>
<div class="td m" style="left:554px;top:702.00px">Dataset</div>
<div class="td cap m" style="left:707px;top:702.00px">RESTRICTED</div>
<div class="bdg act m" style="left:861px;top:697.00px;width:71px">ACTIVE</div>
<div class="bdg act m" style="left:1002px;top:697.00px;width:57px">TRUE</div>
<div class="td m" style="left:1129px;top:702.00px;letter-spacing:0.45px">10 Nov 2025</div>
<div class="td m" style="left:1308px;top:702.00px;letter-spacing:0.2px">Centre of Data for Pu<span class="el">...</span></div>
<div class="td m" style="left:1500px;top:702.00px;letter-spacing:0px">Rajasthan Forest Dep<span class="el">...</span></div>
<div class="btn m" style="left:1726px;top:692.00px;background:#4a7a14;box-shadow:0 2px 4px rgba(0,0,0,.12)"><svg style="position:absolute;left:8px;top:8px" width="20" height="20" viewBox="0 0 20 20"><rect width="20" height="20" rx="3" fill="#02a89c"/><path d="M3 10Q6.2 5 10 5Q13.8 5 17 10Q13.8 15 10 15Q6.2 15 3 10Z" fill="none" stroke="#fff" stroke-width="1.9"/><circle cx="10" cy="10" r="2.4" fill="none" stroke="#fff" stroke-width="1.6"/></svg></div>
<div class="btn m" style="left:1780px;top:692.00px;background:#fef3c7;border:1px solid #fde68a;box-shadow:0 2px 4px rgba(0,0,0,.08)"><svg style="position:absolute;left:9px;top:8px" width="16" height="17" viewBox="0 0 16 17"><path d="M4.5 7.5V5Q4.5 1.5 8 1.5Q11.5 1.5 11.5 5V7.5" fill="none" stroke="#dc7a0b" stroke-width="2.2"/><rect x="1.5" y="7" width="13" height="9.5" rx="2" fill="#dc7a0b"/></svg></div>
<div class="btn m" style="left:1824px;top:692.00px;background:#fef2f2;box-shadow:0 2px 4px rgba(0,0,0,.08)"><svg style="position:absolute;left:11px;top:9px" width="14" height="17" viewBox="0 0 14 17"><path d="M5.2 1.8H8.8" stroke="#dc2626" stroke-width="1.3" stroke-linecap="round"/><path d="M0.6 3.3H13.4" stroke="#dc2626" stroke-width="1.7"/><path d="M1.4 4.9H12.6L12 15.4Q11.9 16.4 10.9 16.4H3.1Q2.1 16.4 2 15.4Z" fill="#dc2626"/></svg></div>
<div class="td m" style="left:324px;top:766.50px">Illegal Forest Pruning Incid<span class="el">...</span></div>
<div class="td m" style="left:554px;top:766.50px">Dataset</div>
<div class="td cap m" style="left:707px;top:766.50px">RESTRICTED</div>
<div class="bdg act m" style="left:861px;top:761.50px;width:71px">ACTIVE</div>
<div class="bdg act m" style="left:1002px;top:761.50px;width:57px">TRUE</div>
<div class="td m" style="left:1129px;top:766.50px;letter-spacing:0.45px">10 Nov 2025</div>
<div class="td m" style="left:1308px;top:766.50px;letter-spacing:0.2px">Centre of Data for Pu<span class="el">...</span></div>
<div class="td m" style="left:1500px;top:766.50px;letter-spacing:0px">Rajasthan Forest Dep<span class="el">...</span></div>
<div class="btn m" style="left:1726px;top:756.50px;background:#4a7a14;box-shadow:0 2px 4px rgba(0,0,0,.12)"><svg style="position:absolute;left:8px;top:8px" width="20" height="20" viewBox="0 0 20 20"><rect width="20" height="20" rx="3" fill="#02a89c"/><path d="M3 10Q6.2 5 10 5Q13.8 5 17 10Q13.8 15 10 15Q6.2 15 3 10Z" fill="none" stroke="#fff" stroke-width="1.9"/><circle cx="10" cy="10" r="2.4" fill="none" stroke="#fff" stroke-width="1.6"/></svg></div>
<div class="btn m" style="left:1780px;top:756.50px;background:#fef3c7;border:1px solid #fde68a;box-shadow:0 2px 4px rgba(0,0,0,.08)"><svg style="position:absolute;left:9px;top:8px" width="16" height="17" viewBox="0 0 16 17"><path d="M4.5 7.5V5Q4.5 1.5 8 1.5Q11.5 1.5 11.5 5V7.5" fill="none" stroke="#dc7a0b" stroke-width="2.2"/><rect x="1.5" y="7" width="13" height="9.5" rx="2" fill="#dc7a0b"/></svg></div>
<div class="btn m" style="left:1824px;top:756.50px;background:#fef2f2;box-shadow:0 2px 4px rgba(0,0,0,.08)"><svg style="position:absolute;left:11px;top:9px" width="14" height="17" viewBox="0 0 14 17"><path d="M5.2 1.8H8.8" stroke="#dc2626" stroke-width="1.3" stroke-linecap="round"/><path d="M0.6 3.3H13.4" stroke="#dc2626" stroke-width="1.7"/><path d="M1.4 4.9H12.6L12 15.4Q11.9 16.4 10.9 16.4H3.1Q2.1 16.4 2 15.4Z" fill="#dc2626"/></svg></div>
<div class="td m" style="left:324px;top:831.00px">Illegal Forest Encroachmen<span class="el">...</span></div>
<div class="td m" style="left:554px;top:831.00px">Dataset</div>
<div class="td cap m" style="left:707px;top:831.00px">RESTRICTED</div>
<div class="bdg act m" style="left:861px;top:826.00px;width:71px">ACTIVE</div>
<div class="bdg act m" style="left:1002px;top:826.00px;width:57px">TRUE</div>
<div class="td m" style="left:1129px;top:831.00px;letter-spacing:0.45px">10 Nov 2025</div>
<div class="td m" style="left:1308px;top:831.00px;letter-spacing:0.2px">Centre of Data for Pu<span class="el">...</span></div>
<div class="td m" style="left:1500px;top:831.00px;letter-spacing:0px">Rajasthan Forest Dep<span class="el">...</span></div>
<div class="btn m" style="left:1726px;top:821.00px;background:#4a7a14;box-shadow:0 2px 4px rgba(0,0,0,.12)"><svg style="position:absolute;left:8px;top:8px" width="20" height="20" viewBox="0 0 20 20"><rect width="20" height="20" rx="3" fill="#02a89c"/><path d="M3 10Q6.2 5 10 5Q13.8 5 17 10Q13.8 15 10 15Q6.2 15 3 10Z" fill="none" stroke="#fff" stroke-width="1.9"/><circle cx="10" cy="10" r="2.4" fill="none" stroke="#fff" stroke-width="1.6"/></svg></div>
<div class="btn m" style="left:1780px;top:821.00px;background:#fef3c7;border:1px solid #fde68a;box-shadow:0 2px 4px rgba(0,0,0,.08)"><svg style="position:absolute;left:9px;top:8px" width="16" height="17" viewBox="0 0 16 17"><path d="M4.5 7.5V5Q4.5 1.5 8 1.5Q11.5 1.5 11.5 5V7.5" fill="none" stroke="#dc7a0b" stroke-width="2.2"/><rect x="1.5" y="7" width="13" height="9.5" rx="2" fill="#dc7a0b"/></svg></div>
<div class="btn m" style="left:1824px;top:821.00px;background:#fef2f2;box-shadow:0 2px 4px rgba(0,0,0,.08)"><svg style="position:absolute;left:11px;top:9px" width="14" height="17" viewBox="0 0 14 17"><path d="M5.2 1.8H8.8" stroke="#dc2626" stroke-width="1.3" stroke-linecap="round"/><path d="M0.6 3.3H13.4" stroke="#dc2626" stroke-width="1.7"/><path d="M1.4 4.9H12.6L12 15.4Q11.9 16.4 10.9 16.4H3.1Q2.1 16.4 2 15.4Z" fill="#dc2626"/></svg></div>
<div class="td m" style="left:324px;top:895.50px">Forest Plantation Sites in R<span class="el">...</span></div>
<div class="td m" style="left:554px;top:895.50px">Dataset</div>
<div class="td cap m" style="left:707px;top:895.50px">RESTRICTED</div>
<div class="bdg act m" style="left:861px;top:890.50px;width:71px">ACTIVE</div>
<div class="bdg act m" style="left:1002px;top:890.50px;width:57px">TRUE</div>
<div class="td m" style="left:1129px;top:895.50px;letter-spacing:0.45px">10 Nov 2025</div>
<div class="td m" style="left:1308px;top:895.50px;letter-spacing:0.2px">Centre of Data for Pu<span class="el">...</span></div>
<div class="td m" style="left:1500px;top:895.50px;letter-spacing:0px">Rajasthan Forest Dep<span class="el">...</span></div>
<div class="btn m" style="left:1726px;top:885.50px;background:#4a7a14;box-shadow:0 2px 4px rgba(0,0,0,.12)"><svg style="position:absolute;left:8px;top:8px" width="20" height="20" viewBox="0 0 20 20"><rect width="20" height="20" rx="3" fill="#02a89c"/><path d="M3 10Q6.2 5 10 5Q13.8 5 17 10Q13.8 15 10 15Q6.2 15 3 10Z" fill="none" stroke="#fff" stroke-width="1.9"/><circle cx="10" cy="10" r="2.4" fill="none" stroke="#fff" stroke-width="1.6"/></svg></div>
<div class="btn m" style="left:1780px;top:885.50px;background:#fef3c7;border:1px solid #fde68a;box-shadow:0 2px 4px rgba(0,0,0,.08)"><svg style="position:absolute;left:9px;top:8px" width="16" height="17" viewBox="0 0 16 17"><path d="M4.5 7.5V5Q4.5 1.5 8 1.5Q11.5 1.5 11.5 5V7.5" fill="none" stroke="#dc7a0b" stroke-width="2.2"/><rect x="1.5" y="7" width="13" height="9.5" rx="2" fill="#dc7a0b"/></svg></div>
<div class="btn m" style="left:1824px;top:885.50px;background:#fef2f2;box-shadow:0 2px 4px rgba(0,0,0,.08)"><svg style="position:absolute;left:11px;top:9px" width="14" height="17" viewBox="0 0 14 17"><path d="M5.2 1.8H8.8" stroke="#dc2626" stroke-width="1.3" stroke-linecap="round"/><path d="M0.6 3.3H13.4" stroke="#dc2626" stroke-width="1.7"/><path d="M1.4 4.9H12.6L12 15.4Q11.9 16.4 10.9 16.4H3.1Q2.1 16.4 2 15.4Z" fill="#dc2626"/></svg></div>
<div class="m" style="left:303px;top:955px;width:1600px;height:1px;background:#e5e7eb"></div>
<div class="m" style="left:303px;top:982px;font-size:15px;line-height:17px;color:#5f6368;letter-spacing:-0.15px">Showing 1 to 10 of 77 entries</div>
<div class="pg m" style="left:1522px;width:41px;color:#6b6b6b;border-color:#777;border-radius:4px 0 0 4px;"><svg width="13" height="12" viewBox="0 0 13 12" style="vertical-align:middle;margin-top:-3px"><path d="M6 1L1.5 6L6 11M11.5 1L7 6L11.5 11" fill="none" stroke="#5f6b7a" stroke-width="2"/></svg></div>
<div class="pg m" style="left:1562px;width:82px;color:#8a8a8a;border-color:#777;">Previous</div>
<div class="pg m" style="left:1643px;width:32px;color:#fff;background:#4a7a14;border-color:#4a7a14;">1</div>
<div class="pg m" style="left:1674px;width:34px;color:#4a7a14;">2</div>
<div class="pg m" style="left:1707px;width:34px;color:#4a7a14;">3</div>
<div class="pg m" style="left:1740px;width:35px;color:#4a7a14;">4</div>
<div class="pg m" style="left:1774px;width:35px;color:#4a7a14;">5</div>
<div class="pg m" style="left:1808px;width:57px;color:#4a7a14;">Next</div>
<div class="pg m" style="left:1864px;width:39px;color:#4a7a14;border-radius:0 4px 4px 0;"><svg width="13" height="12" viewBox="0 0 13 12" style="vertical-align:middle;margin-top:-3px"><path d="M1.5 1L6 6L1.5 11M7 1L11.5 6L7 11" fill="none" stroke="#4a7a14" stroke-width="2"/></svg></div>
</body></html>
